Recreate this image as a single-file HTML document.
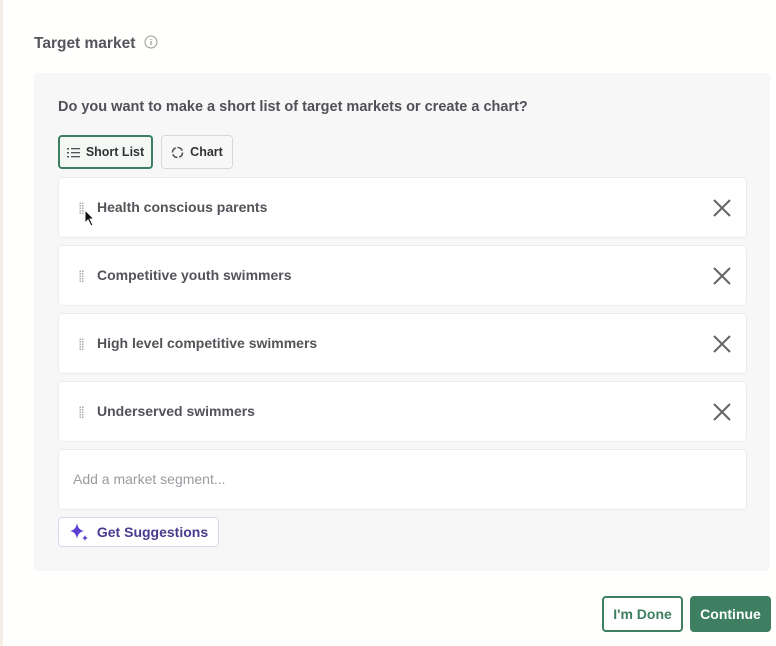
<!DOCTYPE html><html><head><style>
body{margin:0;width:776px;height:646px;background:#fffffd;font-family:"Liberation Sans",sans-serif;position:relative;overflow:hidden;color:#4a4a52}
.lb{position:absolute;left:0;top:0;width:3px;height:646px;background:#f3efe7}
.t{position:absolute;left:34px;top:35px;font-size:15.5px;font-weight:bold;color:#55555c}
.panel{position:absolute;left:34px;top:73px;width:736px;height:498px;background:#f7f7f8;border-radius:4px}
.q{position:absolute;left:58px;top:99px;font-size:14.5px;font-weight:bold;color:#505058}
.btn{position:absolute;box-sizing:border-box;border-radius:4px;font-size:12.5px;font-weight:bold;display:flex;align-items:center;justify-content:center;gap:6px}
.row{position:absolute;left:58px;width:689px;height:61px;background:#fff;border:1px solid #ececef;border-radius:4px;box-sizing:border-box}
.row span{position:absolute;left:38px;top:21px;font-size:14px;font-weight:bold;color:#53535a}
.grip{position:absolute;left:20px;top:24px;width:5px;height:12px;background:radial-gradient(circle,#aaa 0.8px,transparent 1px) 0 0/2.5px 2.5px}
.x{position:absolute;right:15px;top:21px}
</style></head><body>
<div class="lb"></div>
<div class="t">Target market <svg width="14" height="14" style="vertical-align:-1px;margin-left:4px"><circle cx="7" cy="7" r="6" fill="none" stroke="#999" stroke-width="1"/><path d="M7 6v4M7 4v1" stroke="#999" stroke-width="1.2"/></svg></div>
<div class="panel"></div>
<div class="q">Do you want to make a short list of target markets or create a chart?</div>
<div class="btn" style="left:58px;top:135px;width:95px;height:34px;border:2px solid #3d7f60;background:#f3f8f5;color:#333"><svg width="13" height="11"><g fill="#555"><rect x="0" y="1" width="2" height="1.5"/><rect x="0" y="5" width="2" height="1.5"/><rect x="0" y="9" width="2" height="1.5"/><rect x="4" y="1" width="9" height="1.3"/><rect x="4" y="5" width="9" height="1.3"/><rect x="4" y="9" width="9" height="1.3"/></g></svg>Short List</div>
<div class="btn" style="left:161px;top:135px;width:72px;height:34px;border:1px solid #d8d8dc;background:#f7f7f8;color:#333"><svg width="13" height="13"><circle cx="6.5" cy="6.5" r="5" fill="none" stroke="#555" stroke-width="1.6" stroke-dasharray="6 1.8"/></svg>Chart</div>
<div class="row" style="top:177px"><div class="grip"></div><span>Health conscious parents</span><svg class="x" width="18" height="18"><path d="M1 1L17 17M17 1L1 17" stroke="#666" stroke-width="2"/></svg></div>
<div class="row" style="top:245px"><div class="grip"></div><span>Competitive youth swimmers</span><svg class="x" width="18" height="18"><path d="M1 1L17 17M17 1L1 17" stroke="#666" stroke-width="2"/></svg></div>
<div class="row" style="top:313px"><div class="grip"></div><span>High level competitive swimmers</span><svg class="x" width="18" height="18"><path d="M1 1L17 17M17 1L1 17" stroke="#666" stroke-width="2"/></svg></div>
<div class="row" style="top:381px"><div class="grip"></div><span>Underserved swimmers</span><svg class="x" width="18" height="18"><path d="M1 1L17 17M17 1L1 17" stroke="#666" stroke-width="2"/></svg></div>
<div class="row" style="top:449px"><span style="left:14px;font-weight:normal;color:#9a9aa0">Add a market segment...</span></div>
<svg style="position:absolute;left:84px;top:209px" width="12" height="18"><path d="M1 1L1 14L4 11L7 17L9 16L6 10L10 10Z" fill="#111" stroke="#fff" stroke-width="1"/></svg>
<div class="btn" style="left:58px;top:517px;width:161px;height:30px;border:1px solid #d9d6ef;background:#fff;color:#4b3a8f;font-size:14px;gap:8px"><svg width="20" height="20"><path d="M8 1Q9 8 15 9Q9 10 8 17Q7 10 1 9Q7 8 8 1Z" fill="#5b3fd0"/><path d="M16 13Q16.5 15.5 19 16Q16.5 16.5 16 19Q15.5 16.5 13 16Q15.5 15.5 16 13Z" fill="#5b3fd0"/></svg>Get Suggestions</div>
<div class="btn" style="left:602px;top:596px;width:81px;height:36px;border:2px solid #3d7f60;background:#fff;color:#3d7f60;font-size:14px">I'm Done</div>
<div class="btn" style="left:690px;top:596px;width:81px;height:36px;background:#3d7f60;color:#fff;font-size:14px">Continue</div>
</body></html>
